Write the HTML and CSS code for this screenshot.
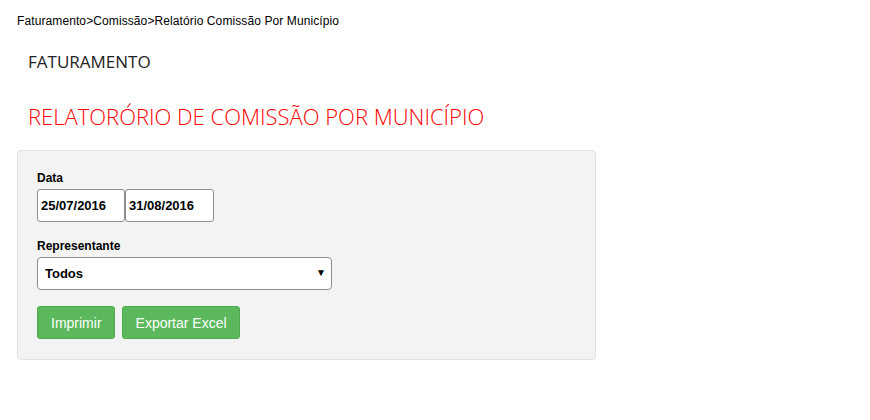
FILE: index.html
```html
<!DOCTYPE html>
<html lang="pt-BR">
<head>
    <meta charset="UTF-8">
    <title>Relatório de Comissão por Município</title>
    <link rel="stylesheet" href="styles.css">
</head>
<body>
    <div class="breadcrumb">Faturamento&gt;Comissão&gt;Relatório Comissão Por Município</div>

    <h2 class="modulo">FATURAMENTO</h2>
    <h1 class="titulo">RELATORÓRIO DE COMISSÃO POR MUNICÍPIO</h1>

    <form class="well">
        <div class="form-group">
            <label for="dataIni">Data</label>
            <div class="datas">
                <input type="text" id="dataIni" value="25/07/2016">
                <input type="text" id="dataFim" value="31/08/2016">
            </div>
        </div>

        <div class="form-group">
            <label for="representante">Representante</label>
            <div class="select-wrap">
                <select id="representante">
                    <option>Todos</option>
                </select>
                <span class="seta">&#9660;</span>
            </div>
        </div>

        <div class="botoes">
            <button type="button" class="btn">Imprimir</button>
            <button type="button" class="btn">Exportar Excel</button>
        </div>
    </form>
</body>
</html>
```

FILE: styles.css
```css
body {
    margin: 0;
    padding: 13px 17px;
    font-family: "Liberation Sans", Arial, sans-serif;
    font-size: 12px;
    color: #000;
    background-color: #ffffff;
}

.breadcrumb {
    line-height: 17px;
    letter-spacing: 0.1px;
}

.modulo, .titulo {
    font-family: "Open Sans", sans-serif;
    font-weight: 400;
    margin: 0;
    padding-left: 11px;
}

.modulo {
    font-size: 17px;
    color: #222;
    margin-top: 21px;
    line-height: 22px;
}

.titulo {
    font-size: 22px;
    font-weight: 300;
    color: #ff0000;
    margin-top: 28px;
    line-height: 30px;
}

.well {
    width: 539px;
    margin-top: 19px;
    padding: 19px 19px 20px;
    background-color: #f3f3f3;
    border: 1px solid #e1e1e1;
    border-radius: 4px;
}

.form-group {
    margin-bottom: 16px;
}

label {
    display: block;
    font-weight: bold;
    line-height: 17px;
    margin-bottom: 2px;
}

.datas {
    display: flex;
}

input[type="text"] {
    width: 88px;
    height: 33px;
    box-sizing: border-box;
    border: 1px solid #8e8e8e;
    border-radius: 3px;
    padding: 0 3px;
    font-family: "Liberation Sans", Arial, sans-serif;
    font-size: 13px;
    font-weight: bold;
    color: #000;
    background-color: #fff;
    margin: 0;
}

#dataFim {
    width: 89px;
}

.select-wrap {
    position: relative;
    width: 295px;
}

select {
    appearance: none;
    -webkit-appearance: none;
    display: block;
    width: 295px;
    height: 33px;
    box-sizing: border-box;
    border: 1px solid #8e8e8e;
    border-radius: 4px;
    padding: 0 7px;
    font-family: "Liberation Sans", Arial, sans-serif;
    font-size: 13px;
    font-weight: bold;
    color: #000;
    background-color: #fff;
}

.seta {
    position: absolute;
    right: 6px;
    top: 10px;
    font-size: 10px;
    color: #000;
}

.botoes {
    display: flex;
    gap: 7px;
}

.btn {
    height: 33px;
    padding: 0 12px 0 13px;
    font-family: "Liberation Sans", Arial, sans-serif;
    font-size: 14px;
    color: #fff;
    background-color: #5cb85c;
    border: 1px solid #4cae4c;
    border-radius: 3px;
    cursor: pointer;
}

.btn:hover {
    background-color: #449d44;
}
```
